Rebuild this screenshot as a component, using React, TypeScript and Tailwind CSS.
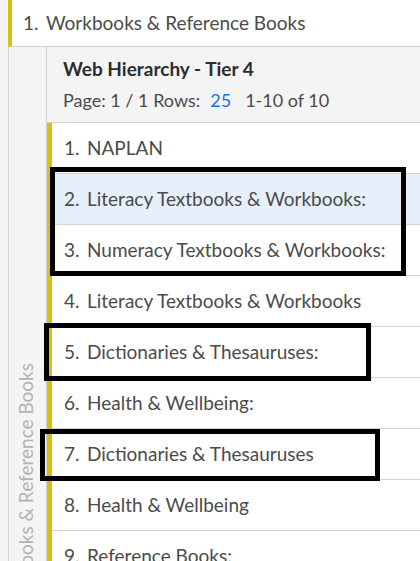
const rows = [
  "NAPLAN",
  "Literacy Textbooks & Workbooks:",
  "Numeracy Textbooks & Workbooks:",
  "Literacy Textbooks & Workbooks",
  "Dictionaries & Thesauruses:",
  "Health & Wellbeing:",
  "Dictionaries & Thesauruses",
  "Health & Wellbeing",
  "Reference Books:",
  "Reading & Phonics",
];

const font = { fontFamily: '"Lato", "Open Sans", sans-serif' };

function Row({ n, label, selected }: { n: number; label: string; selected?: boolean }) {
  return (
    <div
      className={`flex h-[51px] items-center border-b border-[#d3d3d3] pl-3 text-[19px] text-[#4b4b4b] ${
        selected ? "bg-[#e6effa]" : "bg-white"
      }`}
    >
      <span className="w-[23px]">{n}.</span>
      <span>{label}</span>
    </div>
  );
}

export default function App() {
  return (
    <div className="relative h-[561px] w-[420px] overflow-hidden bg-[#f4f4f4] pl-2" style={font}>
      <div className="flex flex-col">
        {/* top level item */}
        <div className="flex h-[47px] items-center border-b border-l-4 border-b-[#d3d3d3] border-l-[#dcc00e] bg-white pl-[11px] text-[19px] text-[#4b4b4b]">
          <span className="w-[23px]">1.</span>
          <span>Workbooks &amp; Reference Books</span>
        </div>

        <div className="flex border-l border-[#d3d3d3]">
          {/* collapsed label gutter */}
          <div className="flex w-[37px] shrink-0 flex-col items-start justify-end pb-[11px] pl-[3px]">
            <span className="rotate-180 whitespace-nowrap text-[19px] text-[#b3b3b3] [writing-mode:vertical-rl]">
              Workbooks &amp; Reference Books
            </span>
          </div>

          {/* sub panel */}
          <div className="flex-1 border-l border-[#d3d3d3]">
            <div className="flex h-[76px] flex-col justify-center gap-[4px] border-b border-[#d3d3d3] bg-[#f4f4f4] pl-4">
              <div className="text-[19px] font-bold text-[#2c2c2c]">Web Hierarchy - Tier 4</div>
              <div className="flex items-center text-[18px] text-[#4b4b4b]">
                <span>Page: 1 / 1 Rows:</span>
                <span className="ml-[10px] text-[#1473e6]">25</span>
                <span className="ml-[14px]">1-10 of 10</span>
              </div>
            </div>
            <div className="border-l-[5px] border-[#dcc00e]">
              {rows.map((r, i) => (
                <Row key={i} n={i + 1} label={r} selected={i === 1} />
              ))}
            </div>
          </div>
        </div>
      </div>

      {/* annotation boxes */}
      <div className="absolute left-[50px] top-[167px] h-[109px] w-[356px] border-[5px] border-black" />
      <div className="absolute left-[44px] top-[323px] h-[58px] w-[327px] border-[5px] border-black" />
      <div className="absolute left-[40px] top-[429px] h-[52px] w-[340px] border-[5px] border-black" />
    </div>
  );
}
